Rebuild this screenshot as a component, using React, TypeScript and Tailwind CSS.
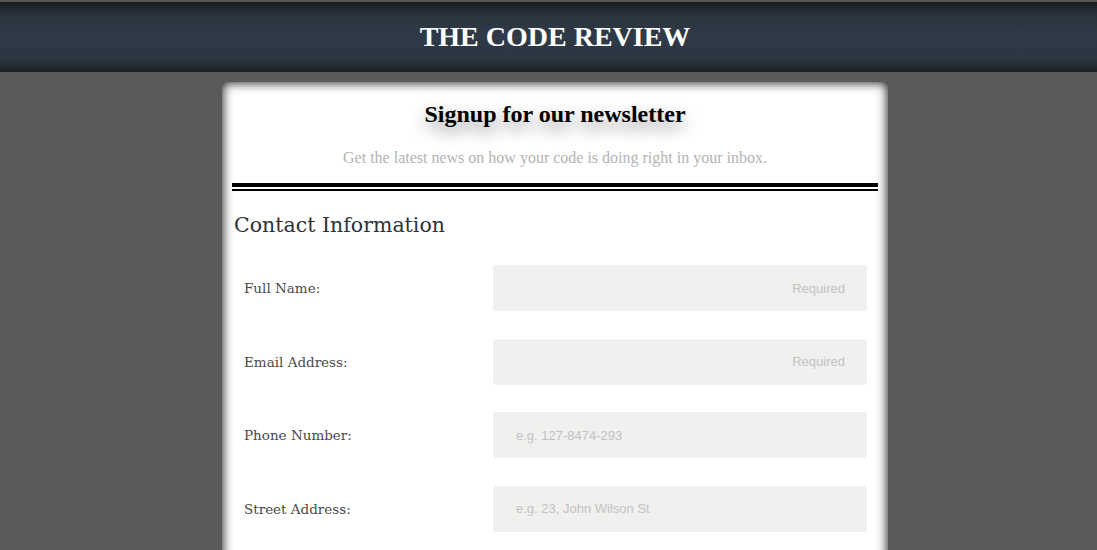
import React from "react";

const rows = [
  { label: "Full Name:", placeholder: "Required", right: true },
  { label: "Email Address:", placeholder: "Required", right: true },
  { label: "Phone Number:", placeholder: "e.g. 127-8474-293", right: false },
  { label: "Street Address:", placeholder: "e.g. 23, John Wilson St", right: false },
];

export default function App() {
  return (
    <div className="h-[550px] w-full overflow-hidden bg-[#5a5a5a] [font-family:'Liberation_Serif',serif]">
      <div className="h-[2px] bg-[#555555]" />
      <header className="flex h-[70px] items-center justify-center pl-[13px] bg-[linear-gradient(to_bottom,#191d22_0%,#2a333d_18%,#2f3b48_50%,#2b3540_82%,#1b2026_100%)]">
        <h1 className="text-[28px] font-bold leading-[32px] text-white [font-family:'Liberation_Serif',serif]">
          THE CODE REVIEW
        </h1>
      </header>
      <div className="pt-[10px] pl-[13px]">
        <div className="mx-auto w-[666px] bg-white px-[10px] pt-[18px] pb-[60px] shadow-[inset_0_0_12px_rgba(0,0,0,1)]">
          <h2 className="text-center text-[24px] font-bold leading-[28px] text-black [text-shadow:0_7px_16px_rgba(0,0,0,0.45)]">
            Signup for our newsletter
          </h2>
          <p className="mt-[20px] text-center text-[16px] leading-[20px] text-[#b3b3b3]">
            Get the latest news on how your code is doing right in your inbox.
          </p>
          <div className="mt-[15px] h-[8px] border-t-4 border-b-2 border-black" />
          <h3 className="mt-[20px] pl-[2px] text-[20.5px] leading-[28px] text-[#2d3239] [font-family:'DejaVu_Serif',serif]">
            Contact Information
          </h3>
          <div className="mt-[26px] flex flex-col gap-[27.5px]">
            {rows.map((r) => (
              <div key={r.label} className="flex items-center">
                <label className="w-[261px] pl-[12px] text-[13.5px] leading-[20px] text-[#4a4a4a] [font-family:'DejaVu_Serif',serif]">
                  {r.label}
                </label>
                <input
                  type="text"
                  placeholder={r.placeholder}
                  className={
                    r.right
                      ? "h-[46px] w-[374px] rounded-[4px] bg-[#f0f0ef] pr-[22px] text-right text-[13px] outline-none [font-family:'Liberation_Sans',sans-serif] placeholder:text-[#c2c2c2]"
                      : "h-[46px] w-[374px] rounded-[4px] bg-[#f0f0ef] pl-[23px] text-left text-[13px] outline-none [font-family:'Liberation_Sans',sans-serif] placeholder:text-[#c2c2c2]"
                  }
                />
              </div>
            ))}
          </div>
        </div>
      </div>
    </div>
  );
}
